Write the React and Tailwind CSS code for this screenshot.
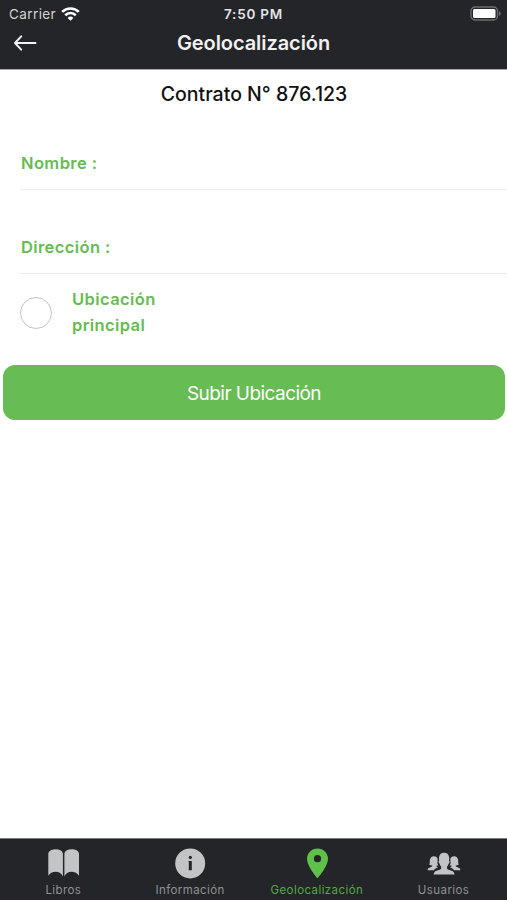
const BookIcon = () => (
  <svg width="32" height="32" viewBox="0 0 32 32" fill="currentColor">
    <path d="M1.300 6.200C2 3.700 5 2.300 8.700 2.300s6.500 1.400 7.200 3.900v23.200c-1.200-2.800-3.800-4.600-7.200-4.600-3.100 0-5.800 1.400-7.400 3.900z" />
    <path d="M32 6.200c-.7-2.500-3.700-3.900-7.400-3.900s-6.500 1.400-7.200 3.900v23.200c1.200-2.800 3.800-4.600 7.200-4.600 3.100 0 5.800 1.400 7.400 3.900z" />
  </svg>
);

const InfoIcon = () => (
  <svg width="32" height="32" viewBox="0 0 32 32">
    <circle cx="16.200" cy="16.400" r="15" fill="currentColor" />
    <circle cx="16.300" cy="10.400" r="1.600" fill="#232528" />
    <path d="M14.700 13.900h3.100v9.300h-3v-8.400h-.5z" fill="#232528" />
  </svg>
);

const PinIcon = () => (
  <svg width="32" height="32" viewBox="0 0 32 32" fill="currentColor" fillRule="evenodd">
    <path d="M16.500 1.400C10.700 1.400 6 5.900 6 11.700c0 7.700 10.500 19.600 10.500 19.600S27 19.400 27 11.700c0-5.800-4.700-10.300-10.500-10.300zm0 6.700a3.600 3.600 0 1 1 0 7.200 3.600 3.600 0 0 1 0-7.200z" />
  </svg>
);

const UsersIcon = () => (
  <svg width="34" height="32" viewBox="0 0 34 32" fill="currentColor">
    <path d="M6.700 27.400c.2-2.200 1.200-3.200 3.500-3.900 2.700-.8 4-1.300 4-2.600v-1.200c-.9-.8-1.300-1.800-1.500-2.900-1-.2-1.500-2.700-.5-3.200-.2-1.200-.3-2.400-.1-3.600.4-2.800 2.200-4.300 5-4.300s4.600 1.500 5 4.300c.2 1.200.1 2.400-.1 3.600 1 .5.500 3-.5 3.200-.2 1.100-.6 2.100-1.500 2.900v1.200c0 1.300 1.300 1.800 4 2.600 2.300.7 3.300 1.700 3.500 3.900z" />
    <path d="M.5 23.300c.2-1.900 1.100-2.500 3-3.100 1.600-.5 1.900-.9 1.800-1.700-1.400-.1-2.500-.5-3.100-1 1-1.400.3-3 .7-4.800.5-2.300 1.700-3.500 4-3.500 2 0 3.300 1 3.800 2.700-.2 1-.2 1.400 0 2.300-.7 1.400-.3 3 .8 4.100-.5.100-1.200.2-2 .2-.1 1 .2 1.300 1.700 1.800-1.900.6-3.300 1.400-4.400 3z" />
    <path d="M33.500 23.300c-.2-1.900-1.100-2.500-3-3.100-1.600-.5-1.900-.9-1.800-1.700 1.400-.1 2.500-.5 3.100-1-1-1.400-.3-3-.7-4.800-.5-2.300-1.700-3.500-4-3.500-2 0-3.300 1-3.800 2.700.2 1 .2 1.400 0 2.300.7 1.400.3 3-.8 4.100.5.100 1.200.2 2 .2.100 1-.2 1.300-1.700 1.800 1.900.6 3.300 1.400 4.400 3z" />
  </svg>
);

const TABS = [
  { label: "Libros", icon: BookIcon },
  { label: "Información", icon: InfoIcon },
  { label: "Geolocalización", icon: PinIcon, active: true },
  { label: "Usuarios", icon: UsersIcon },
];

const StatusBar = () => (
  <div className="grid h-7 grid-cols-3 items-center">
    <div className="flex items-center gap-[5px] pl-[9px] text-[13.500px] tracking-[0.400px] text-[#d4d4d6]">
      Carrier
      <svg width="19" height="15" viewBox="0 0 19 15" fill="none" stroke="#fff" strokeWidth="2.700">
        <path d="M1.200 4.900a11.800 11.800 0 0 1 16.600 0" />
        <path d="M4.200 8.200a7.500 7.500 0 0 1 10.600 0" />
        <path d="M9.500 13.800 6.600 10.900a4.100 4.100 0 0 1 5.800 0z" fill="#fff" stroke="none" />
      </svg>
    </div>
    <div className="text-center text-[13.500px] font-semibold tracking-[0.800px] text-[#e4e4e6]">7:50 PM</div>
    <div className="flex justify-end pr-[5px]">
      <svg width="32" height="16" viewBox="0 0 32 16">
        <rect x="1" y="1" width="26.500" height="13" rx="4" fill="none" stroke="#6c6d70" strokeWidth="1.300" />
        <rect x="3" y="3" width="22.500" height="9" rx="1.500" fill="#fff" />
        <path d="M29 5.200c2.200.7 2.200 3.900 0 4.600z" fill="#6c6d70" />
      </svg>
    </div>
  </div>
);

const Header = () => (
  <header className="h-[70px] shrink-0 border-b border-[#a7a7aa] bg-[#232528]">
    <StatusBar />
    <div className="grid h-[30px] grid-cols-[1fr_auto_1fr] items-center">
      <button className="pl-[13px]" aria-label="Volver">
        <svg width="24" height="18" viewBox="0 0 24 18" fill="none" stroke="#f4f4f5" strokeWidth="1.900">
          <path d="M22.500 9H2M8.200 2.300 2 9l6.200 6.700" strokeLinejoin="round" strokeLinecap="round" />
        </svg>
      </button>
      <h1 className="text-[20px] font-semibold tracking-[-0.080px] text-[#f1f1f2]">Geolocalización</h1>
    </div>
  </header>
);

const Field = ({ label }) => (
  <label className="ml-5 flex h-[84px] items-end border-b border-[#ededef] pb-[13px]">
    <span className="pl-px text-[16.500px] leading-[25px] font-semibold tracking-[0.400px] text-[#66bb52]">
      {label}
    </span>
  </label>
);

const TabBar = () => (
  <nav className="grid h-[62px] shrink-0 grid-cols-4 border-t border-[#77797b] bg-[#232528]">
    {TABS.map(({ label, icon: Icon, active }) => (
      <button
        key={label}
        className={`flex flex-col items-center pt-2 ${active ? "text-[#5fc04a]" : "text-[#c3c4c6]"}`}
      >
        <Icon />
        <span
          className={`mt-[3px] text-[11.500px] leading-4 tracking-[0.420px] ${active ? "text-[#57a847]" : "text-[#909295]"}`}
        >
          {label}
        </span>
      </button>
    ))}
  </nav>
);

export default function App() {
  return (
    <div className="flex h-screen flex-col bg-white font-['Inter','Liberation_Sans',sans-serif]">
      <Header />
      <main className="flex-1">
        <h2 className="pt-2 pl-px text-center text-[19.500px] leading-8 font-medium text-[#111]">
          Contrato N° 876.123
        </h2>
        <div className="-mt-1">
          <Field label="Nombre :" />
          <Field label="Dirección :" />
        </div>
        <label className="ml-5 flex h-[77px] items-center">
          <span className="size-8 rounded-full border-[1.500px] border-[#c4c4c6]" />
          <span className="ml-5 w-[110px] text-[16.500px] leading-[25.500px] font-semibold tracking-[0.400px] text-[#66bb52]">
            Ubicación principal
          </span>
        </label>
        <div className="pt-[14px] pr-[2px] pl-[3px]">
          <button className="h-[55px] w-full rounded-[12px] bg-[#67bc54] pt-[3px] text-[19px] tracking-[-0.550px] text-white">
            Subir Ubicación
          </button>
        </div>
      </main>
      <TabBar />
    </div>
  );
}
